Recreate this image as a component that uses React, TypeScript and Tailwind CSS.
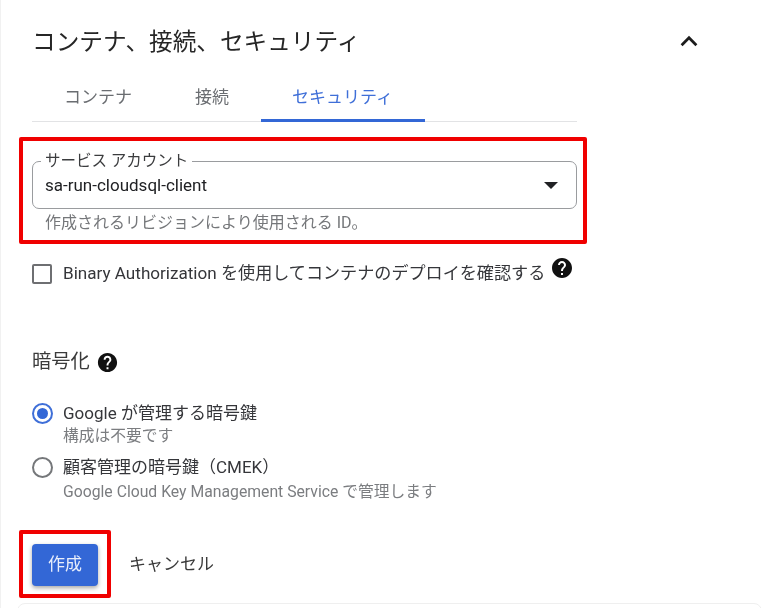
import React from "react";

const font = { fontFamily: '"Roboto","Noto Sans CJK JP",sans-serif' };

function Help({ size }: { size: number }) {
  return (
    <svg width={size} height={size} viewBox="0 0 24 24" className="shrink-0">
      <path fill="#111" d="M12 2C6.48 2 2 6.48 2 12s4.48 10 10 10 10-4.48 10-10S17.52 2 12 2zm1 17h-2v-2h2v2zm2.07-7.75l-.9.92C13.45 12.9 13 13.5 13 15h-2v-.5c0-1.1.45-2.1 1.17-2.83l1.24-1.26c.37-.36.59-.86.59-1.41 0-1.1-.9-2-2-2s-2 .9-2 2H8c0-2.21 1.79-4 4-4s4 1.79 4 4c0 .88-.36 1.68-.93 2.25z" />
    </svg>
  );
}

export default function App() {
  return (
    <div style={font} className="relative h-[608px] w-[767px] overflow-hidden border-l border-[#f1f1f1] bg-white pl-[31px] text-[#2f2f2f] blur-[0.35px]">
      <div className="flex h-[82px] items-center pr-[67px]">
        <h1 className="mt-[3px] flex-1 text-[23.65px] leading-none font-normal text-[#262626]">コンテナ、接続、セキュリティ</h1>
        <svg width="22" height="22" viewBox="0 0 24 24" fill="none" stroke="#1c1c1c" strokeWidth="3" strokeLinecap="square">
          <path d="M5 15.5l7-7 7 7" />
        </svg>
      </div>

      <div className="flex h-[40px] w-[545px] items-start border-b border-[#e2e3e5] text-[17px] leading-[30px] text-[#6a6d71]">
        <div className="w-[132px] pl-[32px]">コンテナ</div>
        <div className="w-[97px] pl-[31px]">接続</div>
        <div className="-mb-px h-[40px] w-[164px] border-b-[3px] border-[#3367d6] pl-[31px] text-[#3f6fd8]">セキュリティ</div>
      </div>

      <section className="-ml-[13px] mt-[15px] h-[107px] w-[568px] rounded-[2px] border-[4px] border-[#f00000] pl-[9px] pt-[20px]">
        <div className="relative flex h-[48px] w-[545px] items-center rounded-[7px] border border-[#9a9c9f] pl-[12px] pr-[18px]">
          <span className="absolute -top-[11px] left-[8px] bg-white px-[4px] text-[15.5px] leading-[20px] text-[#3b3c3e]">サービス アカウント</span>
          <span className="flex-1 text-[17px] leading-none text-[#202124]">sa-run-cloudsql-client</span>
          <span className="h-0 w-0 border-x-[7px] border-t-[7px] border-x-transparent border-t-[#202124]"></span>
        </div>
        <p className="pl-[13px] pt-[4px] text-[16px] leading-[20px] text-[#75777a]">作成されるリビジョンにより使用される ID。</p>
      </section>

      <div className="mt-[18px] flex h-[28px] items-start">
        <span className="mt-[2px] h-[20px] w-[20px] rounded-[2px] border-2 border-[#6e6f72]"></span>
        <span className="ml-[11px] mt-[-3px] text-[17.1px] leading-[28px] text-[#35363a]">Binary Authorization を使用してコンテナのデプロイを確認する</span>
        <span className="ml-[5px] -mt-[6px]"><Help size={24} /></span>
      </div>

      <div className="mt-[58px] flex h-[28px] items-center">
        <h2 className="text-[19.3px] leading-none font-normal text-[#3a3a3a]">暗号化</h2>
        <span className="ml-[6px]"><Help size={23} /></span>
      </div>

      <div className="mt-[25px] flex h-[24px] items-center">
        <span className="flex h-[21px] w-[21px] items-center justify-center rounded-full border-2 border-[#3f6fd8]">
          <span className="h-[11px] w-[11px] rounded-full bg-[#3367d6]"></span>
        </span>
        <span className="ml-[10px] text-[17px] leading-none text-[#35363a]">Google が管理する暗号鍵</span>
      </div>
      <p className="mt-[1px] pl-[31px] text-[15.75px] leading-[20px] text-[#7b7d80]">構成は不要です</p>
      <div className="mt-[9px] flex h-[24px] items-center">
        <span className="h-[21px] w-[21px] rounded-full border-2 border-[#75777a]"></span>
        <span className="ml-[10px] text-[17px] leading-none text-[#35363a]">顧客管理の暗号鍵（CMEK）</span>
      </div>
      <p className="mt-[3px] pl-[31px] text-[15.75px] leading-[20px] text-[#7b7d80]">Google Cloud Key Management Service で管理します</p>

      <div className="mt-[28px] flex items-center">
        <div className="-ml-[13px] h-[68px] w-[92px] rounded-[2px] border-[4px] border-[#f00000] pl-[9px] pt-[10px]">
          <button className="h-[42px] w-[66px] rounded-[4px] bg-[#3367d6] text-[17px] text-[#e8eefb] shadow-[0_2px_4px_rgba(0,0,0,0.35)]">作成</button>
        </div>
        <button className="ml-[18px] mt-[2px] text-[17px] text-[#3a3a3a]">キャンセル</button>
      </div>
      <div className="absolute -bottom-[40px] left-[16px] h-[45px] w-[745px] rounded-[8px] border border-[#efefef]"></div>
    </div>
  );
}
